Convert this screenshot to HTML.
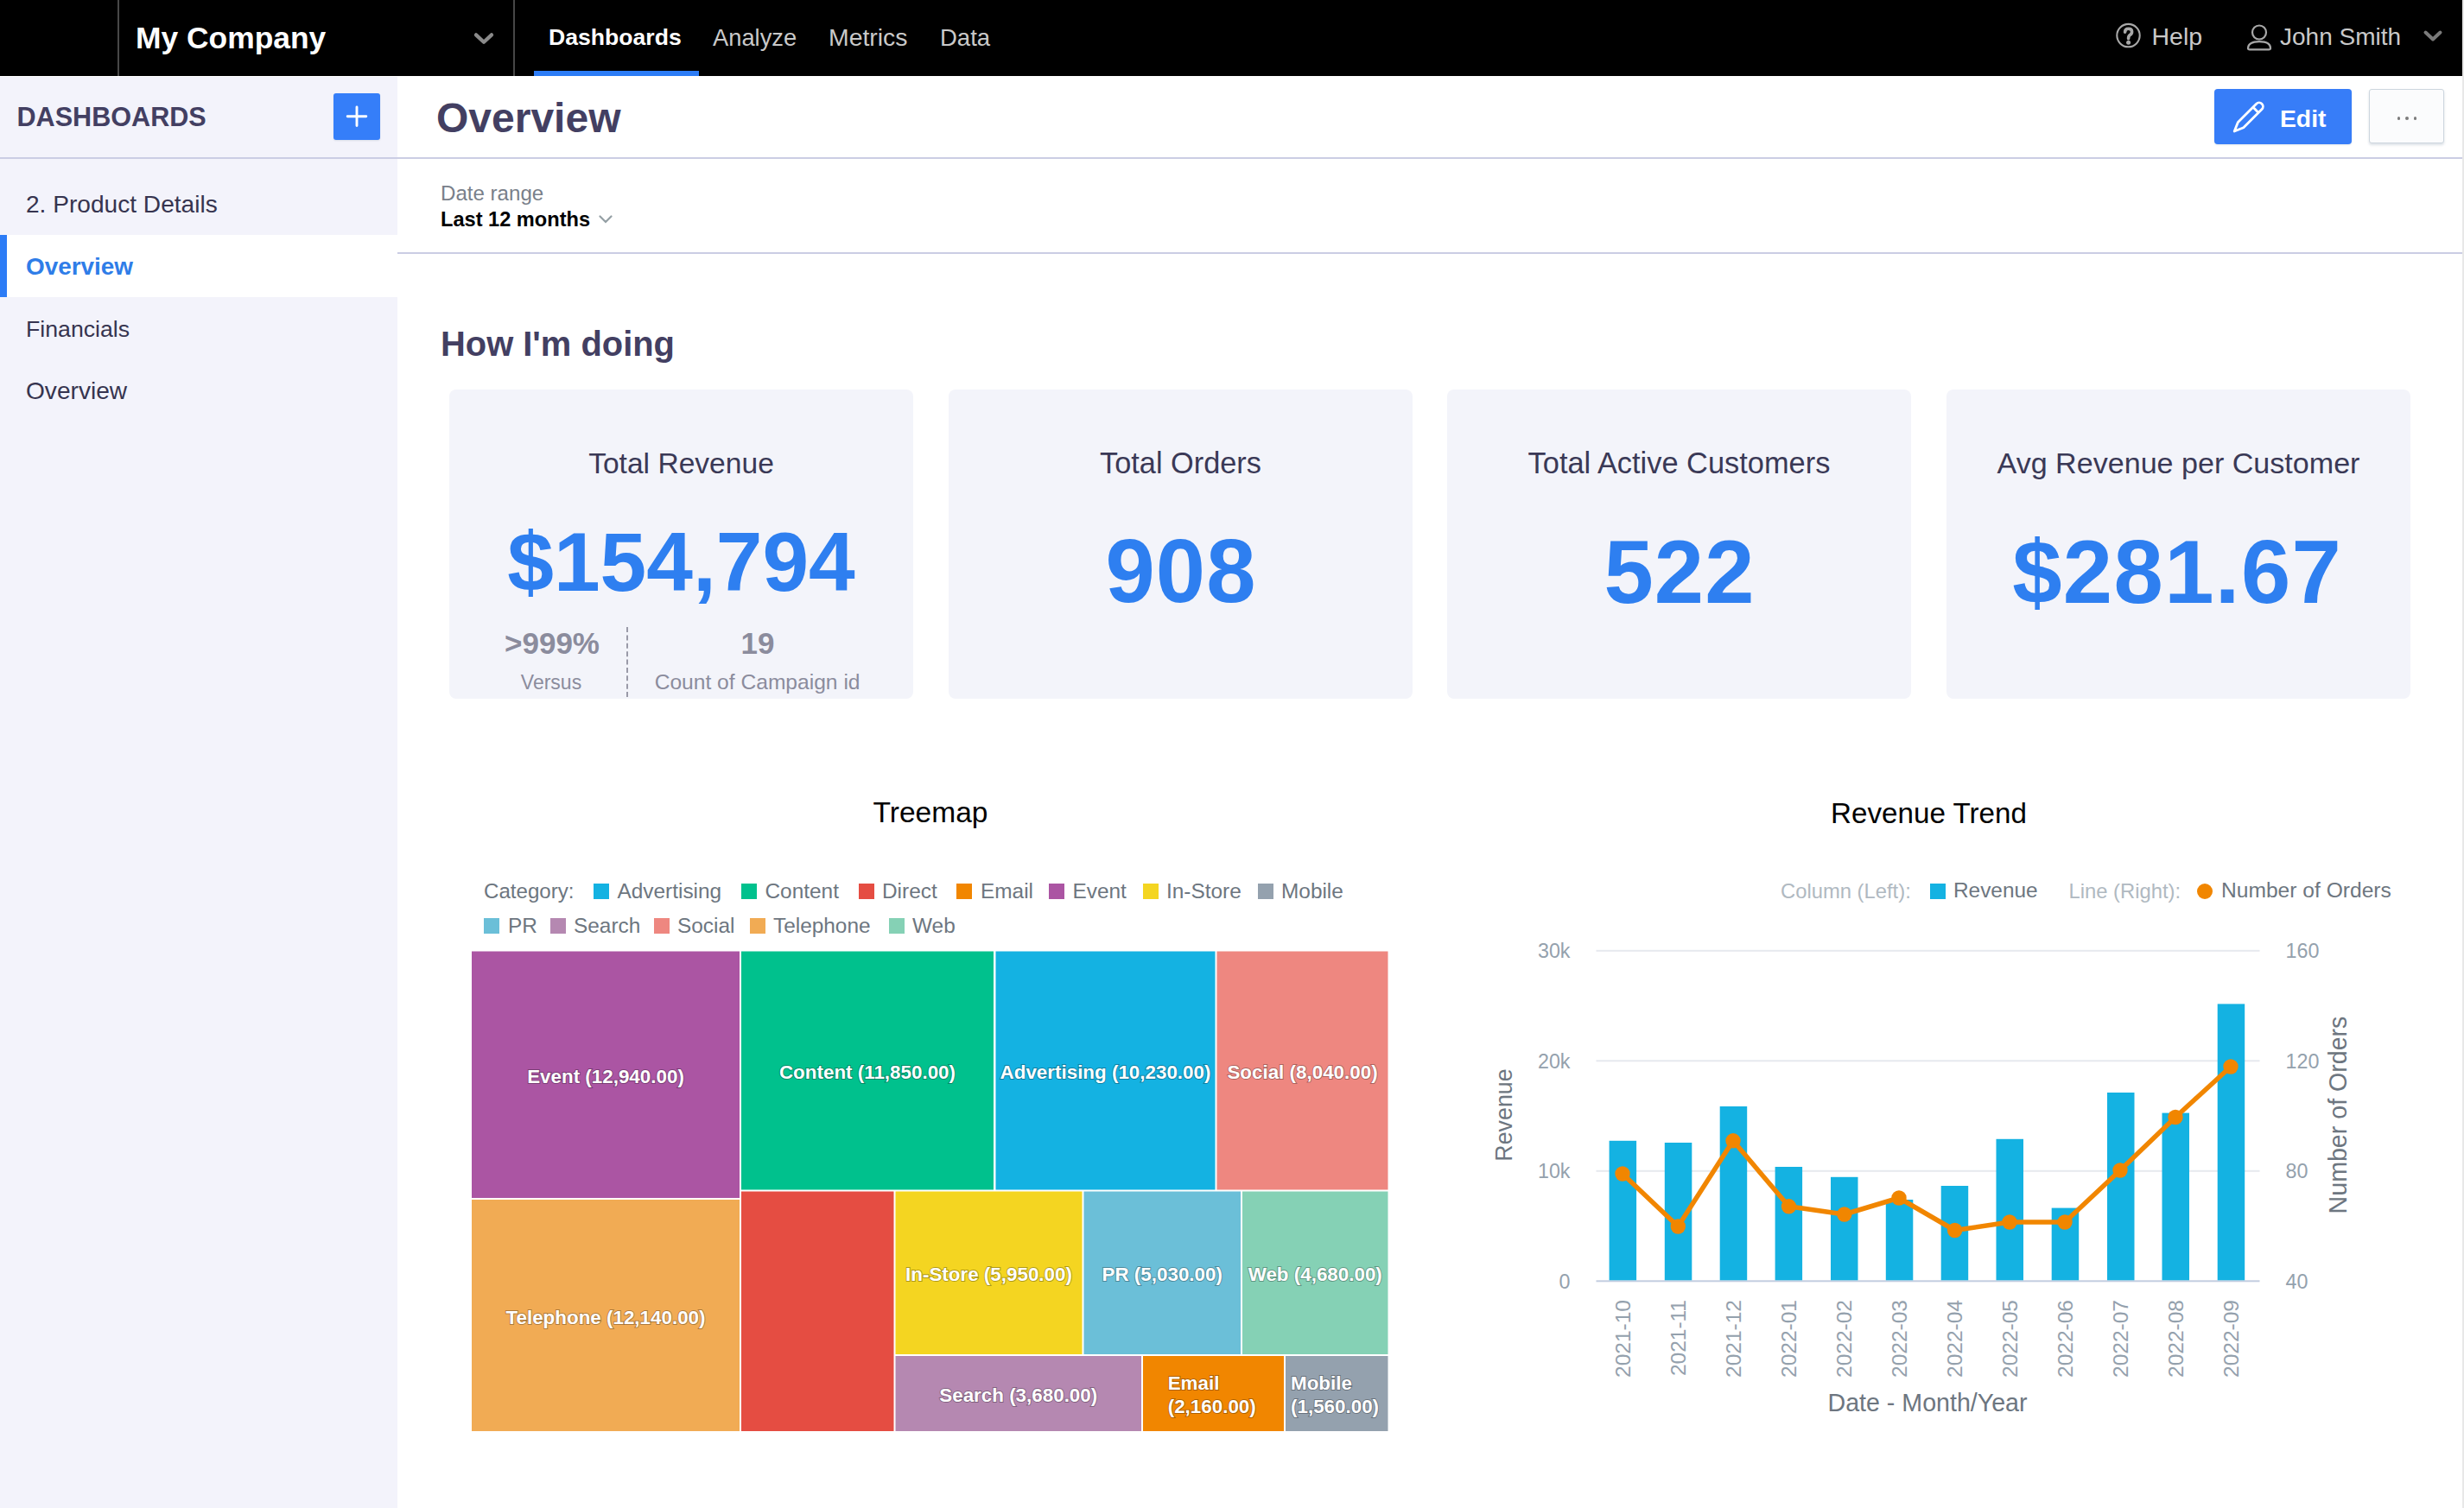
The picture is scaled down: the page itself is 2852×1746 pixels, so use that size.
<!DOCTYPE html>
<html><head><meta charset="utf-8"><title>Overview</title>
<style>
html,body{margin:0;padding:0;width:2852px;height:1746px;overflow:hidden;background:#fff;font-family:"Liberation Sans", sans-serif;}
.t{position:absolute;white-space:nowrap;line-height:1;}
.r{position:absolute;}
svg text{font-family:"Liberation Sans", sans-serif;}
.tl{font-size:22.4px;font-weight:700;fill:#fff;stroke:rgba(0,0,0,0.28);stroke-width:2px;paint-order:stroke;}
.ax{font-size:23.3px;fill:#94a1ad;}
.mx{font-size:24.5px;fill:#94a1ad;}
.at{font-size:28.6px;fill:#6d7680;}
</style></head><body>
<div class="r" style="left:0px;top:0px;width:2850px;height:88px;background:#000;"></div>
<div class="r" style="left:0px;top:88px;width:460px;height:1658px;background:#f3f3fb;"></div>
<div class="r" style="left:2850px;top:0px;width:2px;height:1746px;background:#e8e8e8;"></div>
<div class="r" style="left:136px;top:0px;width:2px;height:88px;background:#474747;"></div>
<div class="r" style="left:594px;top:0px;width:2px;height:88px;background:#474747;"></div>
<div class="r" style="left:0px;top:88px;width:460px;height:1px;background:#fff;"></div>
<div class="t" style="left:157.0px;top:27.2px;font-size:35.4px;font-weight:700;color:#fff;">My Company</div>
<svg class="r" style="left:545px;top:31.5px" width="30" height="28"><path d="M6 8.4 L15 16.8 L24 8.4" fill="none" stroke="#8a8a8a" stroke-width="4.3" stroke-linecap="round" stroke-linejoin="round"/></svg>
<div class="t" style="left:635.0px;top:30.3px;font-size:26.6px;font-weight:700;color:#fff;">Dashboards</div>
<div class="r" style="left:618px;top:82px;width:191px;height:6px;background:#2c7cf6;"></div>
<div class="t" style="left:825.0px;top:29.7px;font-size:27.3px;font-weight:400;color:#c9c9c9;">Analyze</div>
<div class="t" style="left:959.0px;top:28.8px;font-size:28.4px;font-weight:400;color:#c9c9c9;">Metrics</div>
<div class="t" style="left:1088.0px;top:29.5px;font-size:27.5px;font-weight:400;color:#c9c9c9;">Data</div>
<svg class="r" style="left:2445px;top:23px" width="38" height="38"><circle cx="18.5" cy="18.1" r="13.2" fill="none" stroke="#a8a8a8" stroke-width="2.1"/><path d="M14.6 14.2 Q14.6 10.2 18.6 10.2 Q22.6 10.2 22.6 13.8 Q22.6 16.4 20.2 17.6 Q18.6 18.6 18.6 21.8" fill="none" stroke="#a8a8a8" stroke-width="3.6" stroke-linecap="round"/><circle cx="18.6" cy="26.2" r="2.5" fill="#a8a8a8"/></svg>
<div class="t" style="left:2490.5px;top:28.1px;font-size:28.5px;font-weight:400;color:#c9c9c9;">Help</div>
<svg class="r" style="left:2597px;top:24.5px" width="38" height="38"><circle cx="18" cy="12.5" r="8" fill="none" stroke="#a8a8a8" stroke-width="2.2"/><path d="M5 31 Q5 23.2 18 23.2 Q31 23.2 31 31 Q31 32.3 29 32.3 L7 32.3 Q5 32.3 5 31 Z" fill="none" stroke="#a8a8a8" stroke-width="2.2" stroke-linejoin="round"/></svg>
<div class="t" style="left:2639.0px;top:28.9px;font-size:28.0px;font-weight:400;color:#c9c9c9;">John Smith</div>
<svg class="r" style="left:2801px;top:29px" width="30" height="28"><path d="M6.5 8.5 L15 16.5 L23.5 8.5" fill="none" stroke="#7a7a7a" stroke-width="4" stroke-linecap="round" stroke-linejoin="round"/></svg>
<div class="t" style="left:19.5px;top:120.1px;font-size:30.6px;font-weight:700;color:#433f62;">DASHBOARDS</div>
<div class="r" style="left:386px;top:108px;width:54px;height:54px;background:#357ef9;border-radius:3px;box-shadow:0 1px 2px rgba(20,56,93,0.12);"></div>
<svg class="r" style="left:386px;top:108px" width="54" height="54"><path d="M16.2 26.8 H37.8 M27 16 V37.6" stroke="#fff" stroke-width="2.9" stroke-linecap="round"/></svg>
<div class="r" style="left:0px;top:182px;width:2850px;height:2px;background:#cbcde4;"></div>
<div class="t" style="left:30.0px;top:223.2px;font-size:28.1px;font-weight:400;color:#36344f;">2. Product Details</div>
<div class="r" style="left:0px;top:272px;width:460px;height:72px;background:#fff;"></div>
<div class="r" style="left:0px;top:272px;width:8px;height:72px;background:#2c7cf6;"></div>
<div class="t" style="left:30.0px;top:295.4px;font-size:27.9px;font-weight:700;color:#2f7de8;">Overview</div>
<div class="t" style="left:30.0px;top:368.4px;font-size:26.7px;font-weight:400;color:#36344f;">Financials</div>
<div class="t" style="left:30.0px;top:439.2px;font-size:28.1px;font-weight:400;color:#36344f;">Overview</div>
<div class="t" style="left:505.0px;top:113.4px;font-size:48px;font-weight:700;color:#433f62;">Overview</div>
<div class="r" style="left:2563px;top:103px;width:159px;height:64px;background:#377df8;border-radius:4px;box-shadow:0 1px 2px rgba(20,56,93,0.12);"></div>
<svg class="r" style="left:0;top:0;overflow:visible" width="1" height="1"><g transform="translate(2586.2,152) rotate(45)"><path d="M0,0 L-4.5,-10.5 L-4.5,-40.5 A4.5,4.5 0 0 1 4.5,-40.5 L4.5,-10.5 Z M-4.5,-35 L4.5,-35" fill="none" stroke="#fff" stroke-width="2.8" stroke-linejoin="round"/></g></svg>
<div class="t" style="left:2639.0px;top:123.2px;font-size:28.3px;font-weight:700;color:#fff;">Edit</div>
<div class="r" style="left:2742px;top:103px;width:87px;height:63px;background:#fbfcfd;border:1.6px solid #cdd6de;box-sizing:border-box;border-radius:3px;box-shadow:0 2px 3px rgba(20,56,93,0.15);"></div>
<div class="r" style="left:2774.7px;top:134.8px;width:3.8px;height:3.8px;border-radius:50%;background:#7c7c7c"></div>
<div class="r" style="left:2784.1px;top:134.8px;width:3.8px;height:3.8px;border-radius:50%;background:#7c7c7c"></div>
<div class="r" style="left:2793.5px;top:134.8px;width:3.8px;height:3.8px;border-radius:50%;background:#7c7c7c"></div>
<div class="t" style="left:510.0px;top:211.6px;font-size:24.1px;font-weight:400;color:#79808a;">Date range</div>
<div class="t" style="left:510.0px;top:243.0px;font-size:23.6px;font-weight:700;color:#000;">Last 12 months</div>
<svg class="r" style="left:690px;top:246px" width="22" height="16"><path d="M4.5 4.5 L11 11 L17.5 4.5" fill="none" stroke="#95a0a5" stroke-width="2.2" stroke-linecap="round"/></svg>
<div class="r" style="left:460px;top:292px;width:2390px;height:2px;background:#cbcde4;"></div>
<div class="t" style="left:510.0px;top:378.7px;font-size:39.9px;font-weight:700;color:#433f62;">How I'm doing</div>
<div class="r" style="left:520px;top:451px;width:537px;height:358px;background:#f3f4fa;border-radius:8px;"></div>
<div class="r" style="left:1098px;top:451px;width:537px;height:358px;background:#f3f4fa;border-radius:8px;"></div>
<div class="r" style="left:1675px;top:451px;width:537px;height:358px;background:#f3f4fa;border-radius:8px;"></div>
<div class="r" style="left:2253px;top:451px;width:537px;height:358px;background:#f3f4fa;border-radius:8px;"></div>
<div class="t" style="left:288.5px;width:1000px;text-align:center;top:519.6px;font-size:33.6px;font-weight:400;color:#3a3956;">Total Revenue</div>
<div class="t" style="left:866.5px;width:1000px;text-align:center;top:519.0px;font-size:34.3px;font-weight:400;color:#3a3956;">Total Orders</div>
<div class="t" style="left:1443.5px;width:1000px;text-align:center;top:518.9px;font-size:34.4px;font-weight:400;color:#3a3956;">Total Active Customers</div>
<div class="t" style="left:2021.5px;width:1000px;text-align:center;top:519.1px;font-size:34.1px;font-weight:400;color:#3a3956;">Avg Revenue per Customer</div>
<div class="t" style="left:288.5px;width:1000px;text-align:center;top:602.9px;font-size:96.5px;font-weight:700;color:#2e7ff0;">$154,794</div>
<div class="t" style="left:866.5px;width:1000px;text-align:center;top:610.4px;font-size:103px;font-weight:700;color:#2e7ff0;letter-spacing:1.1px;text-indent:1.1px;">908</div>
<div class="t" style="left:1443.5px;width:1000px;text-align:center;top:610.8px;font-size:103px;font-weight:700;color:#2e7ff0;letter-spacing:1.1px;text-indent:1.1px;">522</div>
<div class="t" style="left:2019.5px;width:1000px;text-align:center;top:610.8px;font-size:103px;font-weight:700;color:#2e7ff0;letter-spacing:1.4px;text-indent:1.4px;">$281.67</div>
<div class="t" style="left:139.0px;width:1000px;text-align:center;top:727.2px;font-size:35px;font-weight:700;color:#8b8c9d;">&gt;999%</div>
<div class="t" style="left:377.0px;width:1000px;text-align:center;top:727.2px;font-size:35px;font-weight:700;color:#8b8c9d;">19</div>
<div class="t" style="left:138.0px;width:1000px;text-align:center;top:779.2px;font-size:23px;font-weight:400;color:#8b8c9d;">Versus</div>
<div class="t" style="left:376.6px;width:1000px;text-align:center;top:777.9px;font-size:24.6px;font-weight:400;color:#8b8c9d;">Count of Campaign id</div>
<div class="r" style="left:725px;top:726px;width:0;height:81px;border-left:2px dashed #9a9aa8"></div>
<div class="t" style="left:577.0px;width:1000px;text-align:center;top:923.6px;font-size:33.5px;font-weight:400;color:#000;">Treemap</div>
<div class="t" style="left:560.0px;top:1020.1px;font-size:24.1px;font-weight:400;color:#6d7680;">Category:</div>
<div class="r" style="left:687px;top:1023px;width:18px;height:18px;background:#14b2e2;"></div>
<div class="t" style="left:714.5px;top:1019.8px;font-size:24.4px;font-weight:400;color:#6d7680;">Advertising</div>
<div class="r" style="left:858px;top:1023px;width:18px;height:18px;background:#00c18d;"></div>
<div class="t" style="left:885.5px;top:1019.8px;font-size:24.4px;font-weight:400;color:#6d7680;">Content</div>
<div class="r" style="left:994px;top:1023px;width:18px;height:18px;background:#e54d42;"></div>
<div class="t" style="left:1021.0px;top:1019.8px;font-size:24.4px;font-weight:400;color:#6d7680;">Direct</div>
<div class="r" style="left:1107px;top:1023px;width:18px;height:18px;background:#f18600;"></div>
<div class="t" style="left:1135.0px;top:1019.8px;font-size:24.4px;font-weight:400;color:#6d7680;">Email</div>
<div class="r" style="left:1214px;top:1023px;width:18px;height:18px;background:#ab55a3;"></div>
<div class="t" style="left:1241.5px;top:1019.8px;font-size:24.4px;font-weight:400;color:#6d7680;">Event</div>
<div class="r" style="left:1323px;top:1023px;width:18px;height:18px;background:#f4d521;"></div>
<div class="t" style="left:1350.0px;top:1019.8px;font-size:24.4px;font-weight:400;color:#6d7680;">In-Store</div>
<div class="r" style="left:1456px;top:1023px;width:18px;height:18px;background:#94a1ae;"></div>
<div class="t" style="left:1483.0px;top:1019.8px;font-size:24.4px;font-weight:400;color:#6d7680;">Mobile</div>
<div class="r" style="left:560px;top:1063px;width:18px;height:18px;background:#6bbfd8;"></div>
<div class="t" style="left:588.0px;top:1060.0px;font-size:24.4px;font-weight:400;color:#6d7680;">PR</div>
<div class="r" style="left:637px;top:1063px;width:18px;height:18px;background:#b588b1;"></div>
<div class="t" style="left:664.0px;top:1060.0px;font-size:24.4px;font-weight:400;color:#6d7680;">Search</div>
<div class="r" style="left:757px;top:1063px;width:18px;height:18px;background:#ee8780;"></div>
<div class="t" style="left:784.0px;top:1060.0px;font-size:24.4px;font-weight:400;color:#6d7680;">Social</div>
<div class="r" style="left:868px;top:1063px;width:18px;height:18px;background:#f1ab54;"></div>
<div class="t" style="left:895.0px;top:1060.0px;font-size:24.4px;font-weight:400;color:#6d7680;">Telephone</div>
<div class="r" style="left:1029px;top:1063px;width:18px;height:18px;background:#85d1b5;"></div>
<div class="t" style="left:1056.0px;top:1060.0px;font-size:24.4px;font-weight:400;color:#6d7680;">Web</div>
<div class="t" style="left:1732.5px;width:1000px;text-align:center;top:924.7px;font-size:33.2px;font-weight:400;color:#000;">Revenue Trend</div>
<div class="t" style="left:2061.0px;top:1019.8px;font-size:23.8px;font-weight:400;color:#b0b9c1;">Column (Left):</div>
<div class="r" style="left:2234px;top:1023px;width:18px;height:18px;background:#14b2e2;"></div>
<div class="t" style="left:2261.0px;top:1019.3px;font-size:24.4px;font-weight:400;color:#6d7680;">Revenue</div>
<div class="t" style="left:2394.5px;top:1019.8px;font-size:23.8px;font-weight:400;color:#b0b9c1;">Line (Right):</div>
<div class="r" style="left:2543px;top:1023px;width:18px;height:18px;border-radius:50%;background:#f18600"></div>
<div class="t" style="left:2571.0px;top:1019.2px;font-size:24.6px;font-weight:400;color:#6d7680;">Number of Orders</div>
<svg class="r" style="left:0;top:0" width="2852" height="1746"><rect x="546" y="1101.5" width="310" height="285.5" fill="#ab55a3"/><rect x="546" y="1389" width="310" height="268" fill="#f1ab54"/><rect x="858" y="1101.5" width="292" height="276.0" fill="#00c18d"/><rect x="1152.5" y="1101.5" width="254.0" height="276.0" fill="#14b2e2"/><rect x="1408.5" y="1101.5" width="198.0" height="276.0" fill="#ee8780"/><rect x="858" y="1379.5" width="176.5" height="277.5" fill="#e54d42"/><rect x="1036.5" y="1379.5" width="216.0" height="188.5" fill="#f4d521"/><rect x="1254.5" y="1379.5" width="181.5" height="188.5" fill="#6bbfd8"/><rect x="1438" y="1379.5" width="168.5" height="188.5" fill="#85d1b5"/><rect x="1036.5" y="1570" width="284.5" height="87" fill="#b588b1"/><rect x="1323" y="1570" width="163" height="87" fill="#f18600"/><rect x="1488" y="1570" width="118.5" height="87" fill="#94a1ae"/><text x="701.0" y="1253.85" text-anchor="middle" class="tl">Event (12,940.00)</text><text x="701.0" y="1532.6" text-anchor="middle" class="tl">Telephone (12,140.00)</text><text x="1004.0" y="1249.1" text-anchor="middle" class="tl">Content (11,850.00)</text><text x="1279.5" y="1249.1" text-anchor="middle" class="tl">Advertising (10,230.00)</text><text x="1507.5" y="1249.1" text-anchor="middle" class="tl">Social (8,040.00)</text><text x="1144.5" y="1483.35" text-anchor="middle" class="tl">In-Store (5,950.00)</text><text x="1345.25" y="1483.35" text-anchor="middle" class="tl">PR (5,030.00)</text><text x="1522.25" y="1483.35" text-anchor="middle" class="tl">Web (4,680.00)</text><text x="1178.75" y="1623.1" text-anchor="middle" class="tl">Search (3,680.00)</text><text x="1351.7" y="1608.5" class="tl">Email</text><text x="1351.7" y="1636" class="tl">(2,160.00)</text><text x="1494" y="1608.5" class="tl">Mobile</text><text x="1494" y="1636" class="tl">(1,560.00)</text><rect x="1847.5" y="1482.3" width="768.0" height="2" fill="#c3cde0"/><rect x="1847.5" y="1354.8" width="768.0" height="2" fill="#e6e9ee"/><rect x="1847.5" y="1227.3" width="768.0" height="2" fill="#e6e9ee"/><rect x="1847.5" y="1099.8" width="768.0" height="2" fill="#e6e9ee"/><text x="1817.5" y="1491.6" text-anchor="end" class="ax">0</text><text x="1817.5" y="1364.1" text-anchor="end" class="ax">10k</text><text x="1817.5" y="1236.6" text-anchor="end" class="ax">20k</text><text x="1817.5" y="1109.1" text-anchor="end" class="ax">30k</text><text x="2645.5" y="1491.6" class="ax">40</text><text x="2645.5" y="1364.1" class="ax">80</text><text x="2645.5" y="1236.6" class="ax">120</text><text x="2645.5" y="1109.1" class="ax">160</text><rect x="1862.6" y="1320.8" width="31.5" height="161.5" fill="#14b2e2"/><rect x="1926.8" y="1323" width="31.5" height="159.3" fill="#14b2e2"/><rect x="1990.7" y="1281" width="31.5" height="201.3" fill="#14b2e2"/><rect x="2054.6" y="1351" width="31.5" height="131.3" fill="#14b2e2"/><rect x="2119" y="1362.8" width="31.5" height="119.5" fill="#14b2e2"/><rect x="2182.8" y="1389" width="31.5" height="93.3" fill="#14b2e2"/><rect x="2246.7" y="1373" width="31.5" height="109.3" fill="#14b2e2"/><rect x="2310.5" y="1318.8" width="31.5" height="163.5" fill="#14b2e2"/><rect x="2374.7" y="1398.6" width="31.5" height="83.7" fill="#14b2e2"/><rect x="2439" y="1265" width="31.5" height="217.3" fill="#14b2e2"/><rect x="2502.5" y="1288.6" width="31.5" height="193.7" fill="#14b2e2"/><rect x="2566.7" y="1162.4" width="31.5" height="319.9" fill="#14b2e2"/><polyline fill="none" stroke="#f18600" stroke-width="5.5" stroke-linejoin="round" points="1878,1359 1942.3,1420 2006,1320.8 2070.5,1396.8 2134.8,1406 2198,1387 2262.6,1424.5 2326,1415 2390,1415 2454,1355 2518,1293.5 2582,1235"/><circle cx="1878" cy="1359" r="8.7" fill="#f18600"/><circle cx="1942.3" cy="1420" r="8.7" fill="#f18600"/><circle cx="2006" cy="1320.8" r="8.7" fill="#f18600"/><circle cx="2070.5" cy="1396.8" r="8.7" fill="#f18600"/><circle cx="2134.8" cy="1406" r="8.7" fill="#f18600"/><circle cx="2198" cy="1387" r="8.7" fill="#f18600"/><circle cx="2262.6" cy="1424.5" r="8.7" fill="#f18600"/><circle cx="2326" cy="1415" r="8.7" fill="#f18600"/><circle cx="2390" cy="1415" r="8.7" fill="#f18600"/><circle cx="2454" cy="1355" r="8.7" fill="#f18600"/><circle cx="2518" cy="1293.5" r="8.7" fill="#f18600"/><circle cx="2582" cy="1235" r="8.7" fill="#f18600"/><text transform="translate(1886.5,1505) rotate(-90)" text-anchor="end" class="mx">2021-10</text><text transform="translate(1950.8,1505) rotate(-90)" text-anchor="end" class="mx">2021-11</text><text transform="translate(2014.5,1505) rotate(-90)" text-anchor="end" class="mx">2021-12</text><text transform="translate(2079.0,1505) rotate(-90)" text-anchor="end" class="mx">2022-01</text><text transform="translate(2143.3,1505) rotate(-90)" text-anchor="end" class="mx">2022-02</text><text transform="translate(2206.5,1505) rotate(-90)" text-anchor="end" class="mx">2022-03</text><text transform="translate(2271.1,1505) rotate(-90)" text-anchor="end" class="mx">2022-04</text><text transform="translate(2334.5,1505) rotate(-90)" text-anchor="end" class="mx">2022-05</text><text transform="translate(2398.5,1505) rotate(-90)" text-anchor="end" class="mx">2022-06</text><text transform="translate(2462.5,1505) rotate(-90)" text-anchor="end" class="mx">2022-07</text><text transform="translate(2526.5,1505) rotate(-90)" text-anchor="end" class="mx">2022-08</text><text transform="translate(2590.5,1505) rotate(-90)" text-anchor="end" class="mx">2022-09</text><text transform="translate(1750,1291) rotate(-90)" text-anchor="middle" class="at" style="font-size:26.8px">Revenue</text><text transform="translate(2716,1291) rotate(-90)" text-anchor="middle" class="at">Number of Orders</text><text x="2231" y="1634" text-anchor="middle" class="at">Date - Month/Year</text></svg>
</body></html>
